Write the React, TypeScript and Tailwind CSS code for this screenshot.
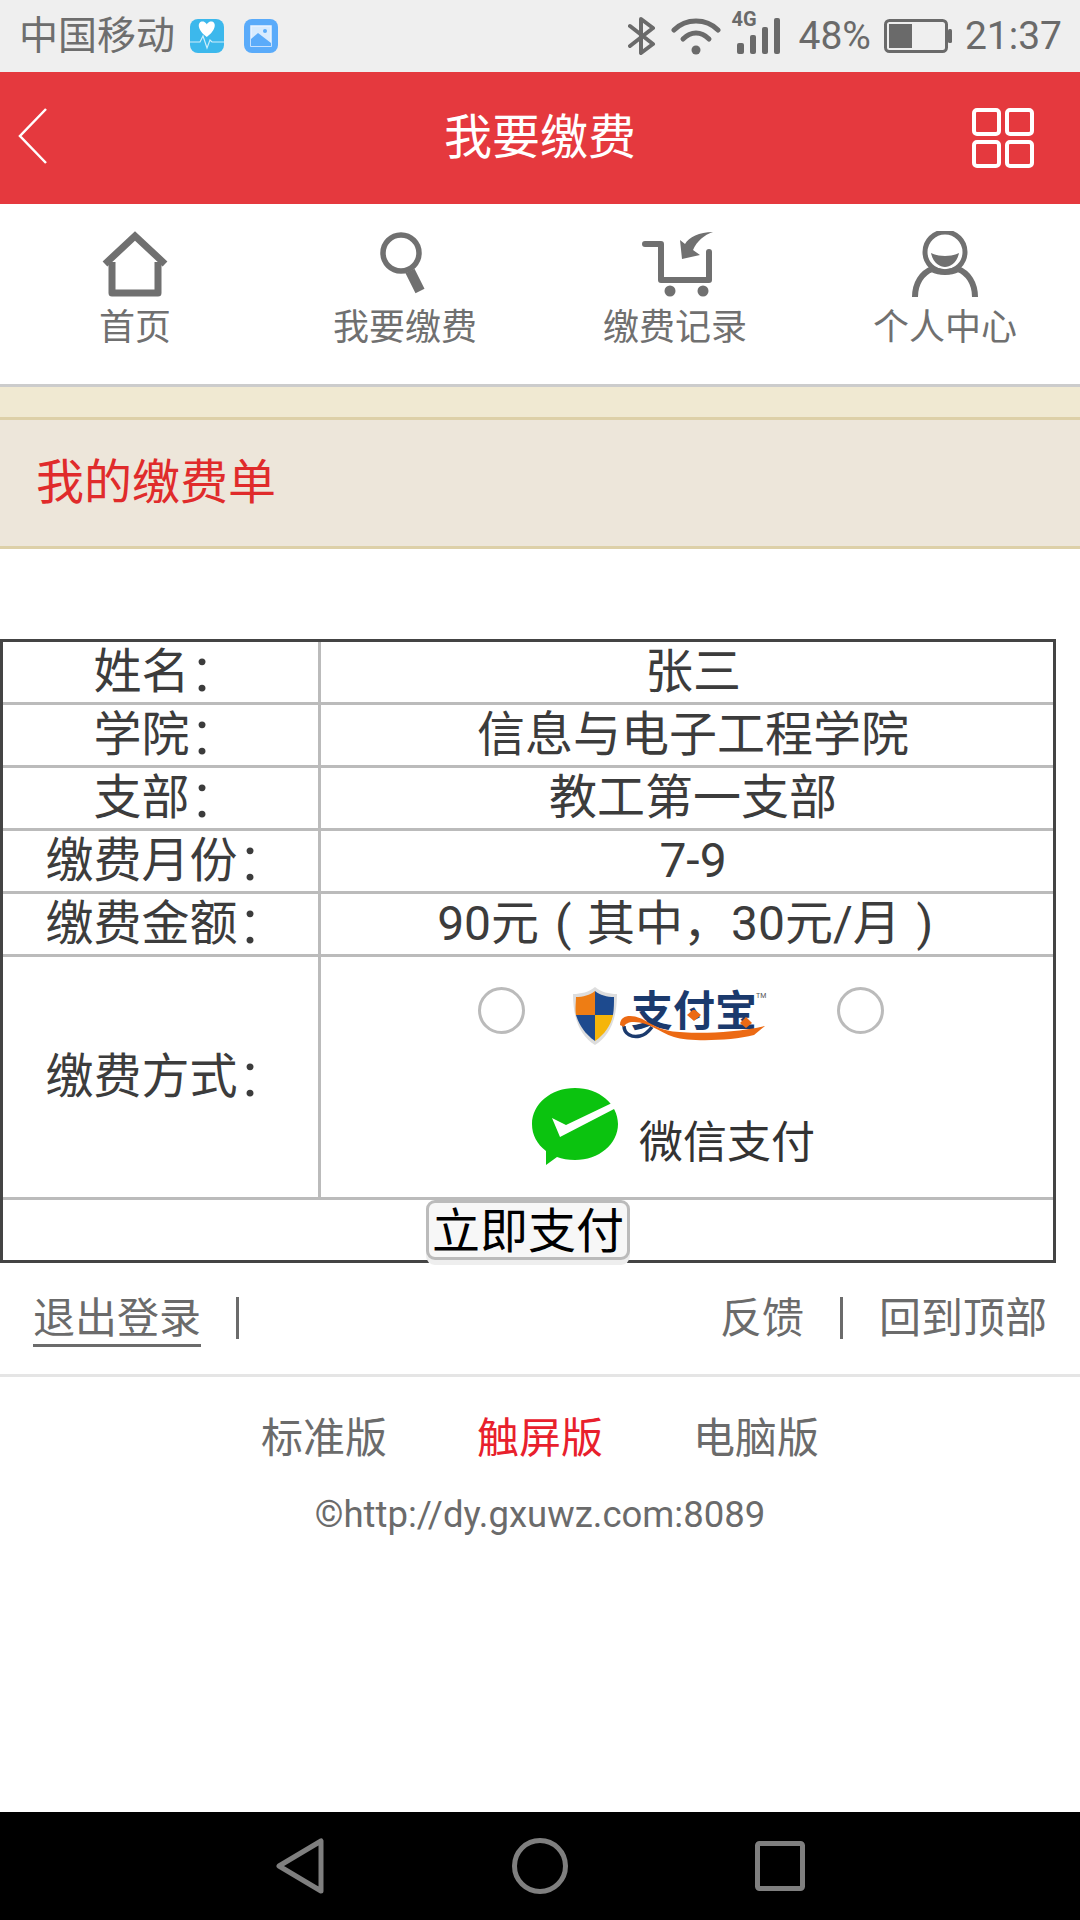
import React from "react";

const Label = ({ text }: { text: string }) => (
  <>
    <span>{text}</span>
    <span className="inline-block w-[38px] pl-[5px] text-left text-[62px] leading-[60px] translate-y-[-2px]">:</span>
  </>
);

const Row = ({ label, children }: { label: string; children: React.ReactNode }) => (
  <tr>
    <td className="w-[318px] p-0 border-r-[3px] border-b-[3px] border-[#bbbbbb]">
      <div className="h-[60px] flex items-center justify-center leading-[60px]">
        <Label text={label} />
      </div>
    </td>
    <td className="p-0 border-b-[3px] border-[#bbbbbb]">
      <div className="h-[60px] flex items-center justify-center pl-[12px] leading-[60px] whitespace-nowrap">
        <span>{children}</span>
      </div>
    </td>
  </tr>
);

const NavItem = ({ icon, label }: { icon: React.ReactNode; label: string }) => (
  <div className="flex flex-col items-center">
    <div className="h-[66px] flex items-center justify-center">{icon}</div>
    <div className="mt-[9px] text-[36px] leading-[44px] text-[#707070]">{label}</div>
  </div>
);

export default function App() {
  return (
    <div className="w-[1080px] h-[1920px] flex flex-col bg-white overflow-hidden font-['Roboto','Noto_Sans_CJK_SC',sans-serif]">
      {/* status bar */}
      <div className="h-[72px] shrink-0 bg-[#efefef] flex items-center pl-[19px] pr-[18px] text-[#6e6e6e]">
        <span className="text-[39px] leading-none w-[171px] whitespace-nowrap">中国移动</span>
        <svg width="34" height="34" viewBox="0 0 34 34">
          <rect width="34" height="34" rx="8" fill="#3cb8ec" />
          <path d="M17 15 C10 10 10 4 14 4 C16 4 17 6 17 6 C17 6 18 4 20 4 C24 4 24 10 17 15Z" fill="#fff" transform="translate(-7 -3) scale(1.4)" />
          <path d="M0 23 H10 L13 17 L17 29 L20 21 L22 23 H34" stroke="#cdeefb" strokeWidth="1.2" fill="none" />
        </svg>
        <svg width="34" height="34" viewBox="0 0 34 34" className="ml-[20px]">
          <rect width="34" height="34" rx="8" fill="#5aabfa" />
          <rect x="7" y="7" width="20" height="20" fill="#d8ebfe" stroke="#eaf4ff" strokeWidth="1.5" />
          <path d="M7 20 L14 14 L27 24 V27 H7Z" fill="#5aabfa" />
          <circle cx="21" cy="12" r="2" fill="#5aabfa" />
        </svg>
        <div className="flex-1" />
        <svg width="28" height="38" viewBox="0 0 28 38" fill="none" stroke="#6a6a6a" strokeWidth="4" strokeLinejoin="round" strokeLinecap="round">
          <path d="M2 9 L25 27 L13 36 V2 L25 11 L2 29" />
        </svg>
        <svg width="50" height="38" viewBox="0 0 50 38" className="ml-[15px]" fill="none" stroke="#6a6a6a" strokeWidth="5" strokeLinecap="round">
          <path d="M3 13 C15 1 35 1 47 13" />
          <path d="M12 22 C20 14 30 14 38 22" />
          <circle cx="25" cy="33" r="4.5" fill="#6a6a6a" stroke="none" />
        </svg>
        <div className="relative w-[49px] h-[42px] ml-[10px] mt-[-6px]">
          <span className="absolute left-0 top-[-2px] text-[20px] leading-[18px] font-bold text-[#6a6a6a]">4G</span>
          <svg width="49" height="42" viewBox="0 0 49 42" className="absolute left-0 top-0" fill="#6a6a6a">
            <rect x="6" y="31" width="7" height="11" rx="2" />
            <rect x="19" y="23" width="6" height="19" rx="2" />
            <rect x="31" y="15" width="6" height="27" rx="2" />
            <rect x="43" y="6" width="6" height="36" rx="2" />
          </svg>
        </div>
        <span className="text-[39px] leading-none ml-[18px] text-[#6a6a6a]">48%</span>
        <svg width="68" height="34" viewBox="0 0 68 34" className="ml-[13px]">
          <rect x="1.5" y="1.5" width="61" height="31" rx="4" fill="none" stroke="#6a6a6a" strokeWidth="3" />
          <rect x="5" y="5" width="23" height="24" fill="#6a6a6a" />
          <rect x="64" y="10" width="4" height="14" rx="1.5" fill="#6a6a6a" />
        </svg>
        <span className="text-[39px] leading-none ml-[13px] text-[#6a6a6a]">21:37</span>
      </div>

      {/* header */}
      <div className="h-[132px] shrink-0 bg-[#e5393e] flex items-center justify-between relative pl-[18px] pr-[46px]">
        <svg width="30" height="56" viewBox="0 0 30 56" fill="none" stroke="#fff" strokeWidth="2.5" className="mt-[-5px]">
          <path d="M28 1 L2 28 L28 55" />
        </svg>
        <span className="absolute inset-x-0 text-center text-[48px] leading-none text-white">我要缴费</span>
        <svg width="62" height="60" viewBox="0 0 62 60" fill="none" stroke="#fff" strokeWidth="4">
          <rect x="2" y="2" width="25" height="24" rx="3" />
          <rect x="35" y="2" width="25" height="24" rx="3" />
          <rect x="2" y="34" width="25" height="24" rx="3" />
          <rect x="35" y="34" width="25" height="24" rx="3" />
        </svg>
      </div>

      {/* nav */}
      <div className="h-[183px] shrink-0 grid grid-cols-4 pt-[27px] border-b-[3px] border-[#cccccc]">
        <NavItem
          label="首页"
          icon={
            <svg width="66" height="66" viewBox="0 0 66 66" fill="none" stroke="#707070" strokeWidth="7">
              <path d="M10 31 V62 H56 V31" strokeLinejoin="round" />
              <path d="M3 33 L33 5 L63 33" />
            </svg>
          }
        />
        <NavItem
          label="我要缴费"
          icon={
            <svg width="46" height="64" viewBox="0 0 46 64" fill="none" stroke="#707070" className="ml-[-4px]">
              <circle cx="21" cy="21" r="18" strokeWidth="5.5" />
              <path d="M30 39 L40 59" strokeWidth="10" />
            </svg>
          }
        />
        <NavItem
          label="缴费记录"
          icon={
            <svg width="72" height="66" viewBox="0 0 72 66" fill="none" className="ml-[6px]">
              <path d="M3 13 H19 V49 H67 V21" stroke="#707070" strokeWidth="6" strokeLinejoin="round" strokeLinecap="round" />
              <circle cx="28" cy="60" r="5.5" fill="#707070" />
              <circle cx="61" cy="60" r="5.5" fill="#707070" />
              <path d="M71 1 C57 1 47 6 43 13 L38 9 L40 28 L58 24 L51 19 C55 10 62 4 71 1Z" fill="#707070" />
            </svg>
          }
        />
        <NavItem
          label="个人中心"
          icon={
            <svg width="66" height="66" viewBox="0 0 66 66" fill="none">
              <circle cx="33" cy="21" r="20" stroke="#707070" strokeWidth="5" />
              <path d="M3 66 C3 52 10 42 20 38 C28 42 38 42 46 38 C56 42 63 52 63 66" stroke="#707070" strokeWidth="6" fill="none" />
              <path d="M19 22 C26 26 40 26 47 22 C45 32 38 36 33 36 C28 36 21 32 19 22Z" fill="#707070" />
            </svg>
          }
        />
      </div>

      {/* section title */}
      <div className="h-[30px] bg-[#f0e9d2] shrink-0" />
      <div className="h-[132px] shrink-0 bg-[#ede6da] border-y-[3px] border-[#ddd0a8] flex items-center pl-[36px] text-[48px] leading-none text-[#e02b2b]">
        我的缴费单
      </div>

      {/* table */}
      <div className="mt-[90px] w-[1056px] shrink-0">
        <table className="w-full border-separate border-spacing-0 border-[3px] border-[#444444] text-[48px] text-[#3c3c3c] table-fixed">
          <tbody>
            <Row label="姓名">张三</Row>
            <Row label="学院">信息与电子工程学院</Row>
            <Row label="支部">教工第一支部</Row>
            <Row label="缴费月份">7-9</Row>
            <Row label="缴费金额">
              90元<span className="inline-block w-[48px] text-center">(</span>其中，30元/月<span className="inline-block w-[48px] text-center">)</span>
            </Row>
            <tr>
              <td className="p-0 border-r-[3px] border-b-[3px] border-[#bbbbbb]">
                <div className="h-[240px] flex items-center justify-center leading-[60px]">
                  <Label text="缴费方式" />
                </div>
              </td>
              <td className="p-0 border-b-[3px] border-[#bbbbbb] align-top">
                <div className="h-[240px]">
                  <div className="flex items-start pl-[157px] pt-[30px] h-[124px]">
                    <span className="w-[47px] h-[47px] rounded-full border-[3px] border-[#bbbbbb] shrink-0" />
                    <svg width="44" height="58" viewBox="0 0 44 58" className="shrink-0 ml-[48px]">
                      <path d="M22 0 C28 5 36 7 44 7 C44 30 38 48 22 58 C6 48 0 30 0 7 C8 7 16 5 22 0Z" fill="#dddddd" />
                      <path d="M22 4 V28 H3 C2 22 3 14 3 10 C10 10 17 8 22 4Z" fill="#ee7d14" />
                      <path d="M22 4 C27 8 34 10 41 10 C41 16 41 22 40 28 H22Z" fill="#1d4a8e" />
                      <path d="M3 28 H22 V54 C12 47 6 38 3 28Z" fill="#1d4a8e" />
                      <path d="M22 28 H40 C38 38 32 47 22 54Z" fill="#f5b50a" />
                    </svg>
                    <div className="relative w-[150px] h-[35px] ml-[3px] mt-[23px] shrink-0">
                      <span className="absolute left-[11px] top-[-19px] text-[42px] leading-[42px] font-bold text-[#1b3a6d] whitespace-nowrap">支付宝</span>
                      <span className="absolute left-[136px] top-[-18px] text-[7px] leading-[8px] text-[#555555]">TM</span>
                      <svg width="150" height="35" viewBox="0 0 150 35" className="absolute left-0 top-0">
                        <path d="M4 16 C4 24 12 28 20 26 C25 25 29 21 32 17" fill="none" stroke="#1b3a6d" strokeWidth="3.5" />
                        <path d="M0 15 C0 8 5 6 10 6 C24 6 32 18 50 21 C70 24 110 24 145 16 L134 25 C110 31 70 32 54 27 C38 22 30 12 14 12 C8 12 5 14 4 17Z" fill="#ec6a14" />
                        <path d="M74 -1 L81 5 L74 11 L67 5Z" fill="#ec6a14" />
                        <path d="M126 7 L132 13 L126 18 L120 13Z" fill="#ec6a14" />
                      </svg>
                    </div>
                    <span className="ml-[67px] w-[47px] h-[47px] rounded-full border-[3px] border-[#bbbbbb] shrink-0" />
                  </div>
                  <div className="flex items-start pl-[211px] pt-[7px]">
                    <svg width="86" height="78" viewBox="0 0 86 78" className="shrink-0">
                      <path d="M43 0 C67 0 86 16 86 36 C86 56 67 72 43 72 C36 72 30 71 25 69 L14 77 L14 63 C5 56 0 47 0 36 C0 16 19 0 43 0Z" fill="#0bc30f" />
                      <path d="M20 30 L34 37 L80 15 L84 20 L28 49Z" fill="#fff" />
                    </svg>
                    <span className="ml-[21px] mt-[33px] text-[44px] leading-none text-[#333333] whitespace-nowrap">微信支付</span>
                  </div>
                </div>
              </td>
            </tr>
            <tr>
              <td colSpan={2} className="p-0">
                <div className="h-[60px] flex justify-center">
                  <button className="relative z-10 w-[204px] h-[60px] rounded-[9px] border-[3px] border-[#bbbbbb] bg-[#f7f7f7] shadow-[0_5px_0_#eeeeee] text-[48px] leading-none text-black p-0 pt-[3px] whitespace-nowrap">
                    立即支付
                  </button>
                </div>
              </td>
            </tr>
          </tbody>
        </table>
      </div>

      {/* footer links */}
      <div className="h-[114px] shrink-0 border-b-[3px] border-[#e5e5e5] flex items-start pt-[34px] pl-[33px] pr-[33px] text-[42px] leading-[44px] text-[#6b6b6b]">
        <span className="border-b-[3px] border-[#6b6b6b] pb-[3px]">退出登录</span>
        <span className="ml-[35px] w-[3px] h-[42px] bg-[#6b6b6b]" />
        <div className="flex-1" />
        <span>反馈</span>
        <span className="ml-[36px] w-[3px] h-[42px] bg-[#6b6b6b]" />
        <span className="ml-[36px]">回到顶部</span>
      </div>
      <div className="flex justify-center gap-[90px] mt-[38px] text-[42px] leading-[48px] text-[#6b6b6b]">
        <span>标准版</span>
        <span className="text-[#e8202c]">触屏版</span>
        <span>电脑版</span>
      </div>
      <div className="mt-[30px] text-center text-[36.5px] leading-[44px] text-[#6b6b6b]">©http://dy.gxuwz.com:8089</div>

      <div className="flex-1" />

      {/* android nav */}
      <div className="h-[108px] shrink-0 bg-black flex items-center justify-center">
        <svg width="48" height="56" viewBox="0 0 48 56" fill="none" stroke="#7f7f7f" strokeWidth="5" strokeLinejoin="round">
          <path d="M3 28 L45 3 V53Z" />
        </svg>
        <svg width="56" height="56" viewBox="0 0 56 56" className="ml-[188px]" fill="none" stroke="#7f7f7f" strokeWidth="5">
          <circle cx="28" cy="28" r="25.5" />
        </svg>
        <svg width="50" height="50" viewBox="0 0 50 50" className="ml-[187px]" fill="none" stroke="#7f7f7f" strokeWidth="5" strokeLinejoin="round">
          <rect x="2.5" y="2.5" width="45" height="45" rx="2" />
        </svg>
      </div>
    </div>
  );
}
